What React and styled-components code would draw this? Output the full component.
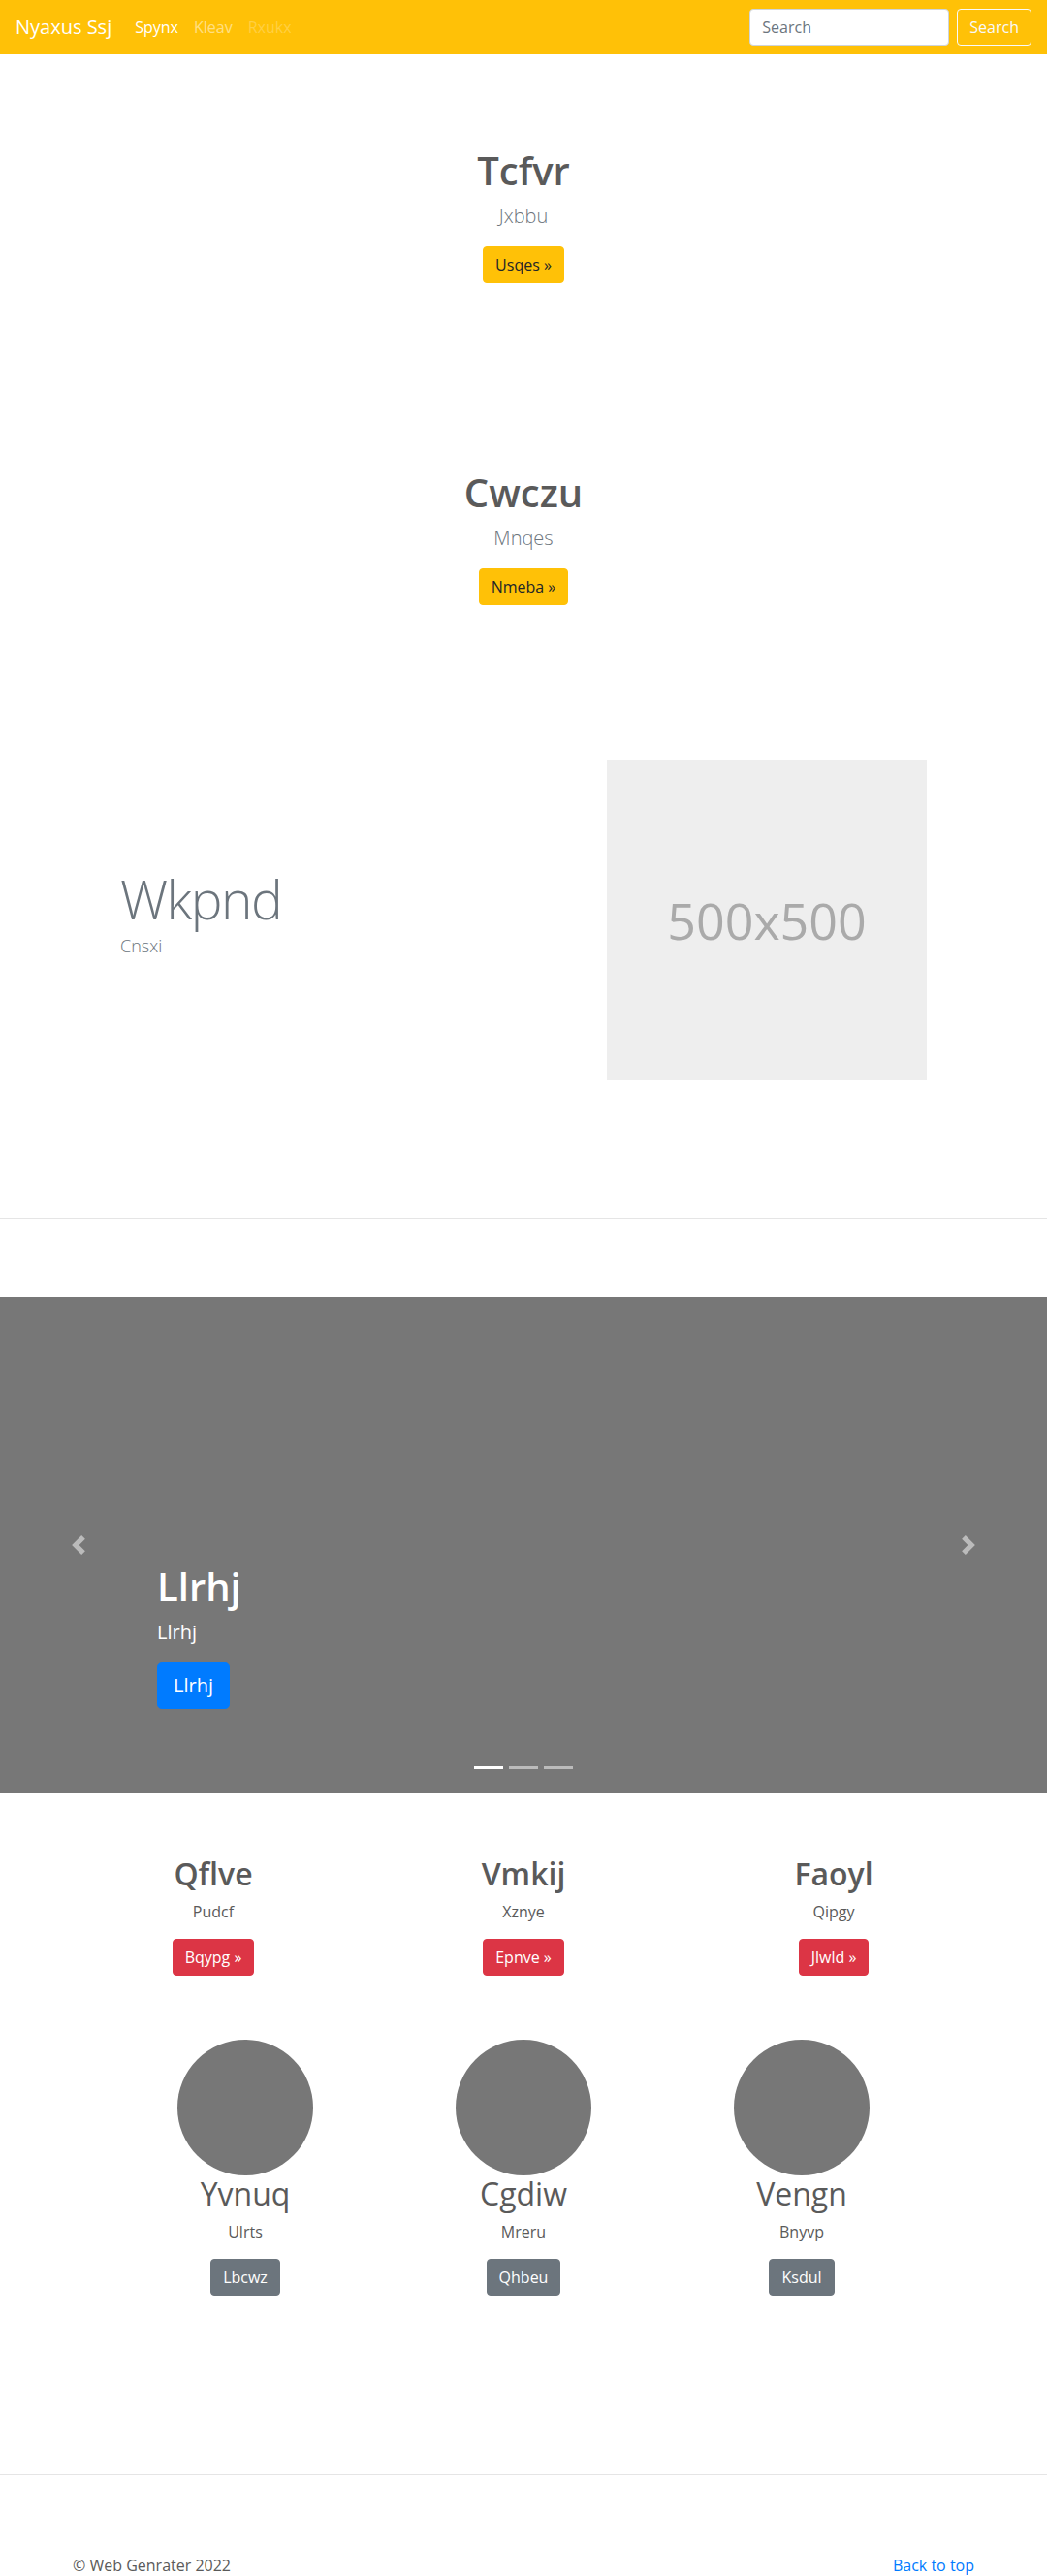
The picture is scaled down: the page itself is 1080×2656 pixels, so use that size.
import React from "react";
import styled, { createGlobalStyle } from "styled-components";

const GlobalStyle = createGlobalStyle`
  *, *::before, *::after { box-sizing: border-box; }
  body {
    margin: 0;
    font-family: "Segoe UI", "Open Sans", "Noto Sans", sans-serif;
    font-size: 16px;
    line-height: 1.5;
    color: #5a5a5a;
    background: #fff;
  }
  h1, h2, p { margin: 0; }
`;

const Navbar = styled.nav`
  display: flex;
  align-items: center;
  height: 56px;
  padding: 0 16px;
  background: #ffc107;
`;

const Brand = styled.a`
  font-size: 20px;
  line-height: 30px;
  color: #fff;
  margin-right: 16px;
  text-decoration: none;
`;

const NavList = styled.div`
  display: flex;
`;

const toneColor = {
  active: "#fff",
  normal: "rgba(255,255,255,.5)",
  disabled: "rgba(255,255,255,.25)",
};

const NavLink = styled.a`
  padding: 8px;
  font-size: 16px;
  line-height: 24px;
  color: ${(p) => toneColor[p.$tone]};
  text-decoration: none;
`;

const SearchForm = styled.form`
  margin-left: auto;
  display: flex;
  gap: 8px;
`;

const SearchInput = styled.input`
  width: 206px;
  height: 38px;
  padding: 6px 12px;
  font: inherit;
  font-size: 16px;
  color: #495057;
  border: 1px solid #ced4da;
  border-radius: 4px;
  background: #fff;
  &::placeholder { color: #6c757d; }
`;

const OutlineButton = styled.button`
  height: 38px;
  padding: 6px 12px;
  font: inherit;
  font-size: 16px;
  line-height: 24px;
  color: #f8f9fa;
  background: transparent;
  border: 1px solid #f8f9fa;
  border-radius: 4px;
`;

const variants = {
  warning: { bg: "#ffc107", fg: "#212529" },
  danger: { bg: "#dc3545", fg: "#fff" },
  primary: { bg: "#007bff", fg: "#fff" },
  secondary: { bg: "#6c757d", fg: "#fff" },
};

const Button = styled.a`
  display: inline-block;
  padding: ${(p) => (p.$lg ? "8px 16px" : "6px 12px")};
  font-size: ${(p) => (p.$lg ? "20px" : "16px")};
  line-height: 1.5;
  border: 1px solid ${(p) => variants[p.$variant].bg};
  border-radius: ${(p) => (p.$lg ? "4.8px" : "4px")};
  background: ${(p) => variants[p.$variant].bg};
  color: ${(p) => variants[p.$variant].fg};
  text-decoration: none;
`;

const Hero = styled.section`
  padding: 96px 16px;
  text-align: center;
`;

const HeroTitle = styled.h1`
  font-size: 40px;
  line-height: 48px;
  font-weight: 600;
  color: #5a5a5a;
  margin-bottom: 8px;
`;

const Lead = styled.p`
  font-size: 20px;
  line-height: 30px;
  font-weight: 300;
  color: #6c757d;
  margin-bottom: 16px;
`;

const Feature = styled.section`
  max-width: 960px;
  margin: 0 auto;
  padding: 64px 0 62px 64px;
  display: grid;
  grid-template-columns: 502px 330px;
  align-items: center;
`;

const FeatureHeading = styled.h2`
  font-size: 55px;
  line-height: 66px;
  font-weight: 300;
  letter-spacing: -1.5px;
  color: #6c757d;
  margin-bottom: 2px;
`;

const FeatureText = styled.p`
  font-size: 18px;
  line-height: 26px;
  font-weight: 300;
  color: #6c757d;
  margin-bottom: 16px;
`;

const Placeholder = styled.div`
  width: 330px;
  height: 330px;
  background: #eee;
  color: #aaa;
  font-size: 52px;
  display: flex;
  align-items: center;
  justify-content: center;
`;

const Divider = styled.hr`
  border: 0;
  border-top: 1px solid rgba(0, 0, 0, 0.1);
  margin: ${(p) => p.$margin};
`;

const Carousel = styled.section`
  position: relative;
  height: 512px;
  background: #777;
  margin-bottom: 64px;
`;

const Slide = styled.div`
  height: 100%;
  display: flex;
  flex-direction: column;
  justify-content: flex-end;
  align-items: flex-start;
  padding: 0 15% 87px;
  color: #fff;
`;

const CaptionTitle = styled.h1`
  font-size: 40px;
  line-height: 48px;
  font-weight: 600;
  margin-bottom: 8px;
`;

const CaptionText = styled.p`
  font-size: 20px;
  line-height: 30px;
  margin-bottom: 16px;
`;

const Control = styled.a`
  position: absolute;
  top: 0;
  bottom: 0;
  ${(p) => (p.$side === "left" ? "left: 0;" : "right: 0;")}
  width: 15%;
  display: flex;
  align-items: center;
  justify-content: center;
  opacity: 0.5;
`;

const Indicators = styled.ol`
  position: absolute;
  left: 0;
  right: 0;
  bottom: 25px;
  margin: 0;
  padding: 0;
  list-style: none;
  display: flex;
  justify-content: center;
  gap: 6px;
`;

const Indicator = styled.li`
  width: 30px;
  height: 3px;
  background: ${(p) => (p.$active ? "#fff" : "rgba(255,255,255,.5)")};
`;

const MarketingRow = styled.div`
  max-width: 960px;
  margin: 0 auto 66px;
  display: grid;
  grid-template-columns: repeat(3, 1fr);
  text-align: center;
`;

const CircleRow = styled.div`
  display: grid;
  grid-template-columns: repeat(3, 287px);
  justify-content: center;
  text-align: center;
`;

const Col = styled.div`
  display: flex;
  flex-direction: column;
  align-items: center;
`;

const ColHeading = styled.h2`
  font-size: 32px;
  line-height: 38px;
  font-weight: ${(p) => (p.$light ? 400 : 600)};
  color: #5a5a5a;
  margin-bottom: 8px;
`;

const ColText = styled.p`
  font-size: 16px;
  line-height: 24px;
  margin-bottom: 16px;
`;

const Circle = styled.div`
  width: 140px;
  height: 140px;
  border-radius: 50%;
  background: #777;
`;

const Footer = styled.footer`
  max-width: 960px;
  margin: 0 auto;
  padding: 81px 15px 0;
  display: flex;
  justify-content: space-between;
  line-height: 24px;
`;

const FooterLink = styled.a`
  color: #007bff;
  text-decoration: none;
`;

const Chevron = ({ dir }) => (
  <svg width="20" height="20" viewBox="0 0 8 8" fill="#fff">
    {dir === "left" ? (
      <path d="M5.25 0l-4 4 4 4 1.5-1.5L4.25 4l2.5-2.5L5.25 0z" />
    ) : (
      <path d="M2.75 0l-1.5 1.5L3.75 4l-2.5 2.5L2.75 8l4-4-4-4z" />
    )}
  </svg>
);

const heroes = [
  { title: "Tcfvr", lead: "Jxbbu", btn: "Usqes »" },
  { title: "Cwczu", lead: "Mnqes", btn: "Nmeba »" },
];

const marketing = [
  { title: "Qflve", text: "Pudcf", btn: "Bqypg »" },
  { title: "Vmkij", text: "Xznye", btn: "Epnve »" },
  { title: "Faoyl", text: "Qipgy", btn: "Jlwld »" },
];

const people = [
  { title: "Yvnuq", text: "Ulrts", btn: "Lbcwz" },
  { title: "Cgdiw", text: "Mreru", btn: "Qhbeu" },
  { title: "Vengn", text: "Bnyvp", btn: "Ksdul" },
];

export default function App() {
  return (
    <>
      <GlobalStyle />
      <Navbar>
        <Brand href="#">Nyaxus Ssj</Brand>
        <NavList>
          <NavLink $tone="active" href="#">Spynx</NavLink>
          <NavLink $tone="normal" href="#">Kleav</NavLink>
          <NavLink $tone="disabled" href="#">Rxukx</NavLink>
        </NavList>
        <SearchForm onSubmit={(e) => e.preventDefault()}>
          <SearchInput placeholder="Search" />
          <OutlineButton type="button">Search</OutlineButton>
        </SearchForm>
      </Navbar>

      {heroes.map((h) => (
        <Hero key={h.title}>
          <HeroTitle>{h.title}</HeroTitle>
          <Lead>{h.lead}</Lead>
          <Button $variant="warning" href="#">{h.btn}</Button>
        </Hero>
      ))}

      <Feature>
        <div>
          <FeatureHeading>Wkpnd</FeatureHeading>
          <FeatureText>Cnsxi</FeatureText>
        </div>
        <Placeholder>500x500</Placeholder>
      </Feature>

      <Divider $margin="80px 0" />

      <Carousel>
        <Slide>
          <CaptionTitle>Llrhj</CaptionTitle>
          <CaptionText>Llrhj</CaptionText>
          <Button $variant="primary" $lg href="#">Llrhj</Button>
        </Slide>
        <Control $side="left" href="#"><Chevron dir="left" /></Control>
        <Control $side="right" href="#"><Chevron dir="right" /></Control>
        <Indicators>
          <Indicator $active />
          <Indicator />
          <Indicator />
        </Indicators>
      </Carousel>

      <MarketingRow>
        {marketing.map((m) => (
          <Col key={m.title}>
            <ColHeading>{m.title}</ColHeading>
            <ColText>{m.text}</ColText>
            <Button $variant="danger" href="#">{m.btn}</Button>
          </Col>
        ))}
      </MarketingRow>

      <CircleRow>
        {people.map((m) => (
          <Col key={m.title}>
            <Circle />
            <ColHeading $light>{m.title}</ColHeading>
            <ColText>{m.text}</ColText>
            <Button $variant="secondary" href="#">{m.btn}</Button>
          </Col>
        ))}
      </CircleRow>

      <Divider $margin="184px 0 0" />

      <Footer>
        <span>© Web Genrater 2022</span>
        <FooterLink href="#">Back to top</FooterLink>
      </Footer>
    </>
  );
}
